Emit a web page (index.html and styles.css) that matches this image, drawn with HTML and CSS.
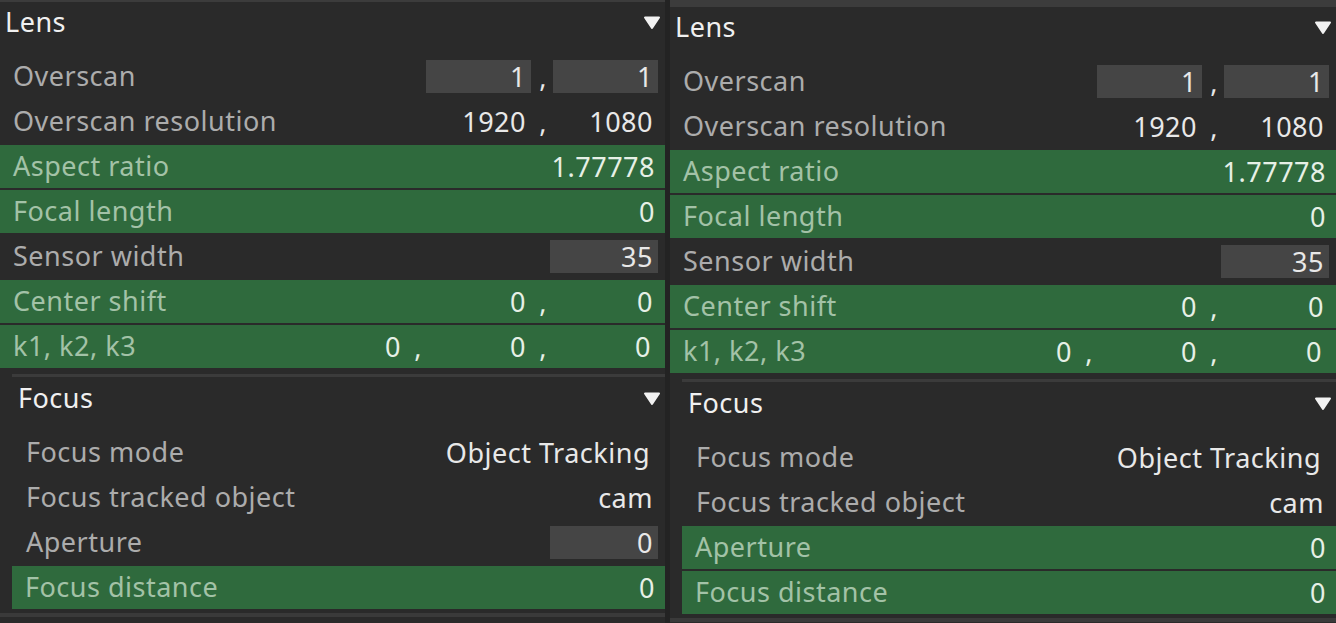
FILE: index.html
```html
<!DOCTYPE html>
<html>
<head>
<meta charset="utf-8">
<link rel="stylesheet" href="styles.css">
</head>
<body>
<div class="page">
  <section class="panel panel-left">
    <div class="sec-head">
      <span class="sec-title">Lens</span>
      <svg class="tri" width="18" height="15" viewBox="0 0 18 15"><path d="M2 2.5 H16 L9 13 Z" fill="#f2f2f2" stroke="#f2f2f2" stroke-width="2" stroke-linejoin="round"/></svg>
    </div>
    <div class="rows">
      <div class="row"><span class="lbl">Overscan</span><div class="vals"><span class="f f2 box">1</span><span class="comma">,</span><span class="f f2 box">1</span></div></div>
      <div class="row"><span class="lbl">Overscan resolution</span><div class="vals"><span class="f f2">1920</span><span class="comma">,</span><span class="f f2">1080</span></div></div>
      <div class="row green"><span class="lbl">Aspect ratio</span><div class="vals"><span class="f">1.77778</span></div></div>
      <div class="row green"><span class="lbl">Focal length</span><div class="vals"><span class="f">0</span></div></div>
      <div class="row"><span class="lbl">Sensor width</span><div class="vals"><span class="f f1 box">35</span></div></div>
      <div class="row green"><span class="lbl">Center shift</span><div class="vals"><span class="f f2">0</span><span class="comma">,</span><span class="f f2">0</span></div></div>
      <div class="row green"><span class="lbl">k1, k2, k3</span><div class="vals vals3"><span class="f f3">0</span><span class="comma">,</span><span class="f f3">0</span><span class="comma">,</span><span class="f f3">0</span></div></div>
    </div>
    <div class="sub">
      <div class="sub-head">
        <span class="sec-title">Focus</span>
        <svg class="tri" width="18" height="15" viewBox="0 0 18 15"><path d="M2 2.5 H16 L9 13 Z" fill="#f2f2f2" stroke="#f2f2f2" stroke-width="2" stroke-linejoin="round"/></svg>
      </div>
      <div class="rows sub-rows">
        <div class="row"><span class="lbl">Focus mode</span><div class="vals"><span class="f txt">Object Tracking</span></div></div>
        <div class="row"><span class="lbl">Focus tracked object</span><div class="vals"><span class="f txt2">cam</span></div></div>
        <div class="row"><span class="lbl">Aperture</span><div class="vals"><span class="f f1 box">0</span></div></div>
        <div class="row green"><span class="lbl">Focus distance</span><div class="vals"><span class="f">0</span></div></div>
      </div>
    </div>
    <div class="bottom-line"></div>
  </section>

  <section class="panel panel-right">
    <div class="sec-head">
      <span class="sec-title">Lens</span>
      <svg class="tri" width="18" height="15" viewBox="0 0 18 15"><path d="M2 2.5 H16 L9 13 Z" fill="#f2f2f2" stroke="#f2f2f2" stroke-width="2" stroke-linejoin="round"/></svg>
    </div>
    <div class="rows">
      <div class="row"><span class="lbl">Overscan</span><div class="vals"><span class="f f2 box">1</span><span class="comma">,</span><span class="f f2 box">1</span></div></div>
      <div class="row"><span class="lbl">Overscan resolution</span><div class="vals"><span class="f f2">1920</span><span class="comma">,</span><span class="f f2">1080</span></div></div>
      <div class="row green"><span class="lbl">Aspect ratio</span><div class="vals"><span class="f">1.77778</span></div></div>
      <div class="row green"><span class="lbl">Focal length</span><div class="vals"><span class="f">0</span></div></div>
      <div class="row"><span class="lbl">Sensor width</span><div class="vals"><span class="f f1 box">35</span></div></div>
      <div class="row green"><span class="lbl">Center shift</span><div class="vals"><span class="f f2">0</span><span class="comma">,</span><span class="f f2">0</span></div></div>
      <div class="row green"><span class="lbl">k1, k2, k3</span><div class="vals vals3"><span class="f f3">0</span><span class="comma">,</span><span class="f f3">0</span><span class="comma">,</span><span class="f f3">0</span></div></div>
    </div>
    <div class="sub">
      <div class="sub-head">
        <span class="sec-title">Focus</span>
        <svg class="tri" width="18" height="15" viewBox="0 0 18 15"><path d="M2 2.5 H16 L9 13 Z" fill="#f2f2f2" stroke="#f2f2f2" stroke-width="2" stroke-linejoin="round"/></svg>
      </div>
      <div class="rows sub-rows">
        <div class="row"><span class="lbl">Focus mode</span><div class="vals"><span class="f txt">Object Tracking</span></div></div>
        <div class="row"><span class="lbl">Focus tracked object</span><div class="vals"><span class="f txt2">cam</span></div></div>
        <div class="row green"><span class="lbl">Aperture</span><div class="vals"><span class="f">0</span></div></div>
        <div class="row green"><span class="lbl">Focus distance</span><div class="vals"><span class="f">0</span></div></div>
      </div>
    </div>
    <div class="bottom-line"></div>
  </section>
</div>
</body>
</html>
```
FILE: styles.css
```css
html, body {
  margin: 0;
  padding: 0;
  background: #232323;
}
body {
  width: 1336px;
  height: 623px;
  overflow: hidden;
  font-family: "Noto Sans", "Open Sans", sans-serif;
  font-size: 27px;
  letter-spacing: 0.5px;
}
.page {
  display: flex;
  gap: 5px;
  height: 623px;
}
.panel {
  background: #2a2a2a;
  display: flex;
  flex-direction: column;
  border-top: 2px solid #3c3c3c;
}
.panel-left {
  width: 665px;
  height: 621px;
}
.panel-right {
  flex: 1;
  border-top-width: 7px;
  height: 616px;
}
.sec-head {
  height: 42px;
  display: flex;
  align-items: center;
  justify-content: space-between;
  padding: 0 4px 0 5px;
}
.sec-title {
  color: #f0f0f0;
  line-height: 1;
  margin-top: -3px;
}
.tri {
  display: block;
  margin-top: -2px;
}
.rows {
  display: flex;
  flex-direction: column;
  gap: 2px;
  margin-top: 11px;
}
.row {
  height: 43px;
  display: flex;
  align-items: center;
  justify-content: space-between;
  padding: 0 7px 0 13px;
}
.row.green {
  background: #2f6a3d;
}
.lbl {
  color: #acacac;
  white-space: nowrap;
  margin-top: -2px;
}
.row.green .lbl {
  color: #a3c2a7;
}
.vals {
  display: flex;
  align-items: center;
  color: #e8e8e8;
}
.row.green .vals {
  color: #e6f0e6;
}
.f {
  height: 33px;
  display: flex;
  align-items: center;
  justify-content: flex-end;
  padding-right: 3px;
  box-sizing: border-box;
  white-space: nowrap;
}
.f2 { width: 105px; padding-right: 5px; }
.f1 { width: 108px; padding-right: 5px; }
.f3 { width: 103px; padding-right: 5px; }
.vals3 { margin-right: 2px; }
.txt { padding-right: 8px; }
.txt2 { padding-right: 5px; }
.box {
  background: #454545;
}
.comma {
  width: 22px;
  text-align: center;
  padding-left: 2px;
  box-sizing: border-box;
}
.sub {
  margin-left: 12px;
  margin-top: 6px;
  border-top: 3px solid #3b3b3b;
}
.sub-head {
  height: 44px;
  display: flex;
  align-items: center;
  justify-content: space-between;
  padding: 0 4px 0 6px;
}
.sub-rows {
  margin-top: 10px;
}
.sub-rows .row {
  padding-left: 13px;
}
.sub-rows .row:not(.green) {
  padding-left: 14px;
}
.bottom-line {
  margin-top: 4px;
  height: 4px;
  background: #3a3a3a;
}
```
